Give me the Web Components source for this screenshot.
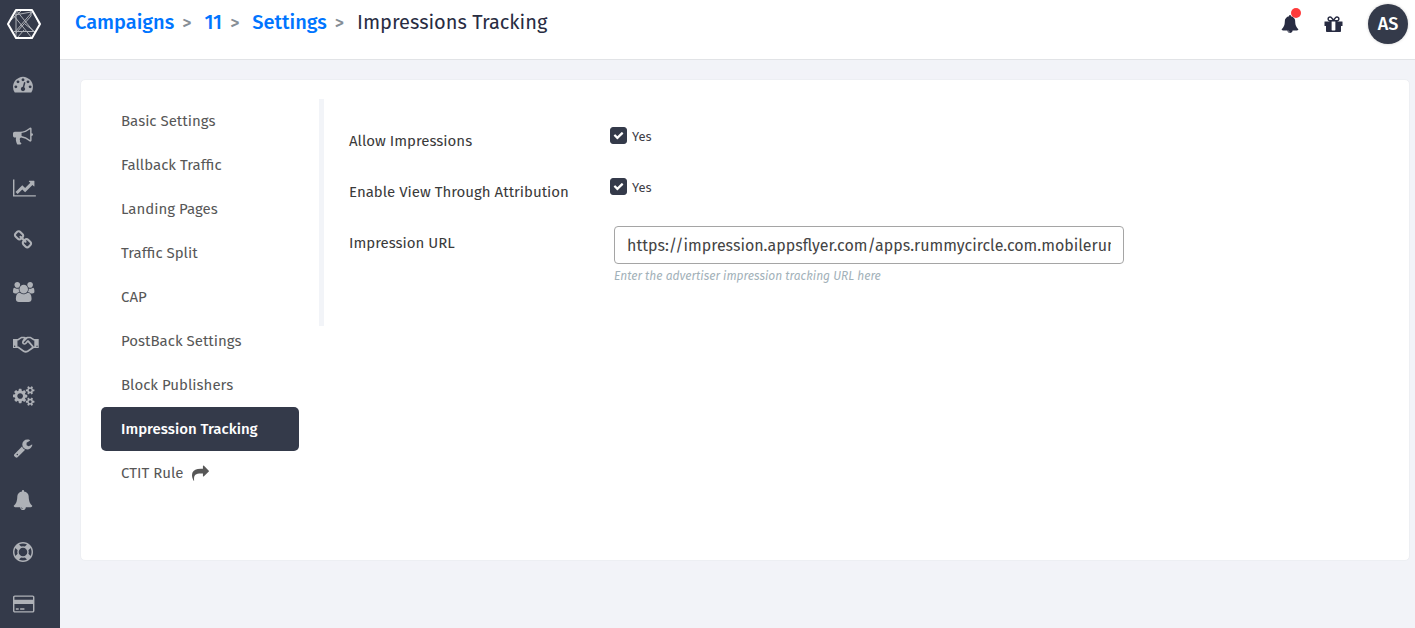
<!DOCTYPE html>
<html lang="en">
<head>
<meta charset="utf-8">
<meta name="viewport" content="width=device-width, initial-scale=1">
<title>Impressions Tracking</title>
<style>
    body {
        margin: 0;
        background: #f2f3f8;
        color: #3f4047;
        font-family: "Fira Sans", "Noto Sans", sans-serif;
        font-size: 15px;
        --dark: #343a4a;
    }
</style>
</head>
<body>
<app-shell>
    <side-bar slot="side"></side-bar>
    <top-bar slot="top" initials="AS">
        <a href="#campaigns">Campaigns</a>
        <a href="#campaign-11">11</a>
        <a href="#settings">Settings</a>
        <span>Impressions Tracking</span>
    </top-bar>
    <settings-card>
        <settings-nav slot="nav">
            <nav-item href="#basic">Basic Settings</nav-item>
            <nav-item href="#fallback">Fallback Traffic</nav-item>
            <nav-item href="#landing">Landing Pages</nav-item>
            <nav-item href="#split">Traffic Split</nav-item>
            <nav-item href="#cap">CAP</nav-item>
            <nav-item href="#postback">PostBack Settings</nav-item>
            <nav-item href="#block">Block Publishers</nav-item>
            <nav-item href="#impression" active>Impression Tracking</nav-item>
            <nav-item href="#ctit">CTIT Rule <fa-icon name="share"></fa-icon></nav-item>
        </settings-nav>
        <check-field label="Allow Impressions"></check-field>
        <check-field label="Enable View Through Attribution"></check-field>
        <url-field label="Impression URL"
            value="https://impression.appsflyer.com/apps.rummycircle.com.mobilerummy"
            hint="Enter the advertiser impression tracking URL here"></url-field>
    </settings-card>
</app-shell>

<script>
// name: [view box width, path], all glyphs are 1792 units high
var smallCog = "v140q0 16-149 31-12 27-30 52 51 113 51 138 0 4-4 7-122 71-124 71-8 0-46-47t-52-68q-20 2-30 2t-30-2q-14 21-52 68t-46 47q-2 0-124-71-4-3-4-7 0-25 51-138-18-25-30-52-149-15-149-31v-140q0-16 149-31 13-29 30-52-51-113-51-138 0-4 4-7 4-2 35-20t59-34 30-16q8 0 46 46.5t52 67.5q20-2 30-2t30 2q51-71 92-112l6-2q4 0 124 70 4 3 4 7 0 25-51 138 17 23 30 52 149 15 149 31z";
var icons = {
    dashboard: [1792, "M384 1152q0-53-37.5-90.5t-90.5-37.5-90.5 37.5-37.5 90.5 37.5 90.5 90.5 37.5 90.5-37.5 37.5-90.5zm192-448q0-53-37.5-90.5t-90.5-37.5-90.5 37.5-37.5 90.5 37.5 90.5 90.5 37.5 90.5-37.5 37.5-90.5zm428 481l101-382q6-26-7.5-48.5t-38.5-29.5-48 6.5-30 39.5l-101 382q-60 5-107 43.5t-63 98.5q-20 77 20 146t117 89 146-20 89-117q16-60-6-117t-72-91zm660-33q0-53-37.5-90.5t-90.5-37.5-90.5 37.5-37.5 90.5 37.5 90.5 90.5 37.5 90.5-37.5 37.5-90.5zm-640-640q0-53-37.5-90.5t-90.5-37.5-90.5 37.5-37.5 90.5 37.5 90.5 90.5 37.5 90.5-37.5 37.5-90.5zm448 192q0-53-37.5-90.5t-90.5-37.5-90.5 37.5-37.5 90.5 37.5 90.5 90.5 37.5 90.5-37.5 37.5-90.5zm320 448q0 261-141 483-19 29-54 29h-1402q-35 0-54-29-141-221-141-483 0-182 71-348t191-286 286-191 348-71 348 71 286 191 191 286 71 348z"],
    bullhorn: [1792, "M1664 640q53 0 90.5 37.5t37.5 90.5-37.5 90.5-90.5 37.5v384q0 52-38 90t-90 38q-417-347-812-380-58 19-91 66t-31 100.5 40 92.5q-20 33-23 65.5t6 58 33.5 55 48 50 61.5 50.5q-29 58-111.5 83t-168.5 11.5-132-55.5q-7-23-29.5-87.5t-32-94.5-23-89-15-101 3.5-98.5 22-110.5h-122q-66 0-113-47t-47-113v-192q0-66 47-113t113-47h480q435 0 896-384 52 0 90 38t38 90v384zm-128 604v-954q-394 302-768 343v270q377 42 768 341z"],
    chart: [2048, "M2048 1536v128h-2048v-1536h128v1408h1920zm-128-1248v435q0 21-19.5 29.5t-35.5-7.5l-121-121-633 633q-10 10-23 10t-23-10l-233-233-416 416-192-192 585-585q10-10 23-10t23 10l233 233 464-464-121-121q-16-16-7.5-35.5t29.5-19.5h435q14 0 23 9t9 23z"],
    chain: [1792, "M1520 1216q0-40-28-68l-208-208q-28-28-68-28-42 0-72 32 3 3 19 18.5t21.5 21.5 15 19 13 25.5 3.5 27.5q0 40-28 68t-68 28q-15 0-27.5-3.5t-25.5-13-19-15-21.5-21.5-18.5-19q-33 31-33 73 0 40 28 68l206 207q27 27 68 27 40 0 68-26l147-146q28-28 28-67zm-703-705q0-40-28-68l-206-207q-28-28-68-28-39 0-68 27l-147 146q-28 28-28 67 0 40 28 68l208 208q27 27 68 27 42 0 72-31-3-3-19-18.5t-21.5-21.5-15-19-13-25.5-3.5-27.5q0-40 28-68t68-28q15 0 27.5 3.5t25.5 13 19 15 21.5 21.5 18.5 19q33-31 33-73zm895 705q0 120-85 203l-147 146q-83 83-203 83-121 0-204-85l-206-207q-83-83-83-203 0-123 88-209l-88-88q-86 88-208 88-120 0-204-84l-208-208q-84-84-84-204t85-203l147-146q83-83 203-83 121 0 204 85l206 207q83 83 83 203 0 123-88 209l88 88q86-88 208-88 120 0 204 84l208 208q84 84 84 204z"],
    users: [1920, "M593 896q-162 5-265 128h-134q-82 0-138-40.5t-56-118.5q0-353 124-353 6 0 43.5 21t97.5 42.5 119 21.5q67 0 133-23-5 37-5 66 0 139 81 256zm1071 637q0 120-73 189.5t-194 69.5h-874q-121 0-194-69.5t-73-189.5q0-53 3.5-103.5t14-109 26.5-108.5 43-97.5 62-81 85.5-53.5 111.5-20q10 0 43 21.5t73 48 107 48 135 21.5 135-21.5 107-48 73-48 43-21.5q61 0 111.5 20t85.5 53.5 62 81 43 97.5 26.5 108.5 14 109 3.5 103.5zm-1024-1277q0 106-75 181t-181 75-181-75-75-181 75-181 181-75 181 75 75 181zm704 384q0 159-112.5 271.5t-271.5 112.5-271.5-112.5-112.5-271.5 112.5-271.5 271.5-112.5 271.5 112.5 112.5 271.5zm576 225q0 78-56 118.5t-138 40.5h-134q-103-123-265-128 81-117 81-256 0-29-5-66 66 23 133 23 59 0 119-21.5t97.5-42.5 43.5-21q124 0 124 353zm-128-609q0 106-75 181t-181 75-181-75-75-181 75-181 181-75 181 75 75 181z"],
    handshake: [2304, "M0 448H420L740 240H1010L1150 290L1290 240H1580L1900 448H2304V1254H1880L1360 1620Q1140 1740 920 1620L430 1254H0ZM150 1040A64 64 0 1 0 150 1168A64 64 0 1 0 150 1040ZM2154 1040A64 64 0 1 0 2154 1168A64 64 0 1 0 2154 1040ZM400 590V1110H500L1000 1470Q1140 1550 1280 1470L1660 1200L1680 1130L1330 740L1190 900Q1030 1040 860 900Q740 760 840 600L980 390H780L480 590H400ZM1320 390L980 720Q930 800 990 830Q1050 850 1110 760L1280 560H1400L1820 1060L1850 1110H1910V590H1840L1540 390Z"],
    cogs: [1920, "M896 896q0-106-75-181t-181-75-181 75-75 181 75 181 181 75 181-75 75-181zm768 512q0-52-38-90t-90-38-90 38-38 90q0 53 37.5 90.5t90.5 37.5 90.5-37.5 37.5-90.5zm0-1024q0-52-38-90t-90-38-90 38-38 90q0 53 37.5 90.5t90.5 37.5 90.5-37.5 37.5-90.5zm-384 421v185q0 10-7 19.5t-16 10.5l-155 24q-11 35-32 76 34 48 90 115 7 11 7 20 0 12-7 19-23 30-82.5 89.5t-78.5 59.5q-11 0-21-7l-115-90q-37 19-77 31-11 108-23 155-7 24-30 24h-186q-11 0-20-7.5t-10-17.5l-23-153q-34-10-75-31l-118 89q-7 7-20 7-11 0-21-8-144-133-144-160 0-9 7-19 10-14 41-53t47-61q-23-44-35-82l-152-24q-10-1-17-9.5t-7-19.5v-185q0-10 7-19.5t16-10.5l155-24q11-35 32-76-34-48-90-115-7-11-7-20 0-12 7-20 22-30 82-89t79-59q11 0 21 7l115 90q34-18 77-32 11-108 23-154 7-24 30-24h186q11 0 20 7.5t10 17.5l23 153q34 10 75 31l118-89q8-7 20-7 11 0 21 8 144 133 144 160 0 8-7 19-12 16-42 54t-45 60q23 48 34 82l152 23q10 2 17 10.5t7 19.5zM1920 1338" + smallCog + "M1920 314" + smallCog],
    wrench: [1792, "M448 1472q0-26-19-45t-45-19-45 19-19 45 19 45 45 19 45-19 19-45zm644-420l-682 682q-37 37-90 37-52 0-91-37l-106-108q-38-36-38-90 0-53 38-91l681-681q39 98 114.5 173.5t173.5 114.5zm634-435q0 39-23 106-47 134-164.5 217.5t-258.5 83.5q-185 0-316.5-131.5t-131.5-316.5 131.5-316.5 316.5-131.5q58 0 121.5 16.5t107.5 46.5q16 11 16 28t-16 28l-293 169v224l193 107q5-3 79-48.5t135.5-81 70.5-35.5q15 0 23.5 10t8.5 25z"],
    bell: [1792, "M912 1696q0-16-16-16-59 0-101.5-42.5t-42.5-101.5q0-16-16-16t-16 16q0 73 51.5 124.5t124.5 51.5q16 0 16-16zm816-288q0 52-38 90t-90 38h-448q0 106-75 181t-181 75-181-75-75-181h-448q-52 0-90-38t-38-90q50-42 91-88t85-119.5 74.5-158.5 50-206 19.5-260q0-152 117-282.5t307-158.5q-8-19-8-39 0-40 28-68t68-28 68 28 28 68q0 20-8 39 190 28 307 158.5t117 282.5q0 139 19.5 260t50 206 74.5 158.5 85 119.5 91 88z"],
    ring: [1792, "M896 0q182 0 348 71t286 191 191 286 71 348-71 348-191 286-286 191-348 71-348-71-286-191-191-286-71-348 71-348 191-286 286-191 348-71zm0 128q-190 0-361 90l194 194q82-28 167-28t167 28l194-194q-171-90-361-90zm-678 1129l194-194q-28-82-28-167t28-167l-194-194q-90 171-90 361t90 361zm678 407q190 0 361-90l-194-194q-82 28-167 28t-167-28l-194 194q171 90 361 90zm0-384q159 0 271.5-112.5t112.5-271.5-112.5-271.5-271.5-112.5-271.5 112.5-112.5 271.5 112.5 271.5 271.5 112.5zm484-217l194 194q90-171 90-361t-90-361l-194 194q28 82 28 167t-28 167z"],
    card: [1920, "M1760 128q66 0 113 47t47 113v1216q0 66-47 113t-113 47h-1600q-66 0-113-47t-47-113v-1216q0-66 47-113t113-47h1600zm-1600 128q-13 0-22.5 9.5t-9.5 22.5v224h1664v-224q0-13-9.5-22.5t-22.5-9.5h-1600zm1600 1280q13 0 22.5-9.5t9.5-22.5v-608h-1664v608q0 13 9.5 22.5t22.5 9.5h1600zm-1504-128v-128h256v128h-256zm384 0v-128h384v128h-384z"],
    gift: [1792, "M1056 1356v-716h-320v716q0 25 18 38.5t46 13.5h192q28 0 46-13.5t18-38.5zm-456-844h195l-126-161q-26-31-69-31-40 0-68 28t-28 68 28 68 68 28zm688-96q0-40-28-68t-68-28q-43 0-69 31l-125 161h194q40 0 68-28t28-68zm376 256v320q0 14-9 23t-23 9h-96v416q0 40-28 68t-68 28h-1088q-40 0-68-28t-28-68v-416h-96q-14 0-23-9t-9-23v-320q0-14 9-23t23-9h440q-93 0-158.5-65.5t-65.5-158.5 65.5-158.5 158.5-65.5q107 0 168 77l128 165 128-165q61-77 168-77 93 0 158.5 65.5t65.5 158.5-65.5 158.5-158.5 65.5h440q14 0 23 9t9 23z"],
    share: [1792, "M1792 640q0 26-19 45l-512 512q-19 19-45 19t-45-19-19-45v-256h-224q-98 0-175.5 6t-154 21.5-133 42.5-105.5 69.5-80 101-48.5 138.5-17.5 181q0 55 5 123 0 6 2.5 23.5t2.5 26.5q0 15-8.5 25t-23.5 10q-16 0-28-17-7-9-13-22t-13.5-30-10.5-24q-127-285-127-451 0-199 53-333 162-403 875-403h224v-256q0-26 19-45t45-19 45 19l512 512q19 19 19 45z"],
    check: [1792, "M1671 566q0 40-28 68l-724 724-136 136q-28 28-68 28t-68-28l-136-136-362-362q-28-28-28-68t28-68l136-136q28-28 68-28t68 28l294 295 656-657q28-28 68-28t68 28l136 136q28 28 28 68z"]
};

class FaIcon extends HTMLElement {
    constructor() {
        super();
        this.attachShadow({mode: "open"});
    }
    connectedCallback() {
        var name = this.getAttribute("name");
        var icon = icons[name];
        this.shadowRoot.innerHTML = `
            <style>
                :host { display: inline-flex; height: var(--icon-size, 20px); }
                svg { height: 100%; fill: currentColor; overflow: visible; }
            </style>
            <svg viewBox="0 0 ${icon[0]} 1792" aria-hidden="true"><path fill-rule="${name == "handshake" ? "evenodd" : "nonzero"}" d="${icon[1]}"/></svg>`;
    }
}

class AppShell extends HTMLElement {
    constructor() {
        super();
        this.attachShadow({mode: "open"}).innerHTML = `
            <style>
                :host { display: flex; height: 100vh; }
                .page { flex: 1; min-width: 0; display: flex; flex-direction: column; }
                main { flex: 1; min-height: 0; overflow: auto; padding: 19px 5px 20px 20px; }
            </style>
            <slot name="side"></slot>
            <div class="page">
                <slot name="top"></slot>
                <main><slot></slot></main>
            </div>`;
    }
}

class SideBar extends HTMLElement {
    constructor() {
        super();
        var names = ["dashboard", "bullhorn", "chart", "chain", "users", "handshake", "cogs", "wrench", "bell", "ring", "card"];
        this.attachShadow({mode: "open"}).innerHTML = `
            <style>
                :host { display: block; width: 60px; flex: none; overflow: hidden; background: var(--dark); color: #aeb1b7; }
                .logo { display: flex; padding: 7px 7px 17px; }
                .logo svg { width: 34px; height: 34px; fill: none; }
                nav a { display: flex; align-items: center; height: 52px; padding-left: 13px; color: inherit; }
            </style>
            <a class="logo" href="#home" aria-label="Home">
                <svg viewBox="0 0 34 34">
                    <path stroke="#aeb1b7" stroke-width="1" d="M9 3L27 25M26 4L8 25M9 3V30M7 24.5H28M8 8L24 5M24 4V9L9 26M7 9L25 31M18 17L28 25M4 13L14 4M28 8L32 17M10 31L17 23"/>
                    <path stroke="#fff" stroke-width="2" stroke-linejoin="round" d="M1 17L9 3H25L33 17L25 31H9Z"/>
                </svg>
            </a>
            <nav>${names.map(n => `<a href="#${n}" aria-label="${n}"><fa-icon name="${n}"></fa-icon></a>`).join("")}</nav>`;
    }
}

class TopBar extends HTMLElement {
    constructor() {
        super();
        this.attachShadow({mode: "open"}).innerHTML = `
            <style>
                :host {
                    display: flex;
                    justify-content: space-between;
                    height: 59px;
                    flex: none;
                    background: #fff;
                    border-bottom: 1px solid #e1e3e6;
                    color: #282c42;
                }
                .crumbs { display: flex; padding: 8px 15px; font-size: 20px; line-height: 28px; }
                ::slotted(a) { color: #0075ff; font-weight: 500; text-decoration: none; }
                ::slotted(a)::after { content: ">"; color: #868e96; font-size: 18px; margin: 0 13px 0 8px; }
                .tools { display: flex; align-items: center; align-self: flex-start; gap: 24px; padding: 4px 7px 0 0; }
                button { border: 0; padding: 0; background: none; color: inherit; font: inherit; }
                .icon { position: relative; display: flex; --icon-size: 21px; }
                .bell { --icon-size: 18px; }
                .dot { position: absolute; left: 10px; top: -7px; width: 10px; height: 10px; border-radius: 50%; background: #ff3b3b; }
                .avatar {
                    width: 40px;
                    height: 40px;
                    border-radius: 50%;
                    background: var(--dark);
                    box-shadow: 0 0 3px #0003;
                    color: #fff;
                    font-size: 18px;
                    font-weight: 500;
                }
            </style>
            <nav class="crumbs" aria-label="Breadcrumb"><slot></slot></nav>
            <div class="tools">
                <button class="icon bell" aria-label="Notifications"><fa-icon name="bell"></fa-icon><span class="dot"></span></button>
                <button class="icon" aria-label="What's new"><fa-icon name="gift"></fa-icon></button>
                <button class="avatar"></button>
            </div>`;
    }
    connectedCallback() {
        this.shadowRoot.querySelector(".avatar").textContent = this.getAttribute("initials");
    }
}

class SettingsCard extends HTMLElement {
    constructor() {
        super();
        this.attachShadow({mode: "open"}).innerHTML = `
            <style>
                :host {
                    display: flex;
                    min-height: 442px;
                    padding: 19px 20px;
                    border: 1px solid #edeff3;
                    border-radius: 5px;
                    background: #fff;
                }
                form {
                    flex: 1;
                    min-width: 0;
                    align-self: flex-start;
                    min-height: 188px;
                    padding: 21px 0 18px 25px;
                    margin-left: 20px;
                    border-left: 5px solid #f2f4f8;
                }
            </style>
            <slot name="nav"></slot>
            <form><slot></slot></form>`;
    }
}

class SettingsNav extends HTMLElement {
    constructor() {
        super();
        this.attachShadow({mode: "open"}).innerHTML = `
            <style>
                :host { display: block; width: 198px; flex: none; }
                nav { display: flex; flex-direction: column; }
            </style>
            <nav aria-label="Campaign settings"><slot></slot></nav>`;
    }
}

class NavItem extends HTMLElement {
    constructor() {
        super();
        this.attachShadow({mode: "open"}).innerHTML = `
            <style>
                :host { display: block; --icon-size: 17px; }
                a {
                    display: flex;
                    align-items: center;
                    gap: 5px;
                    height: 44px;
                    padding: 0 20px;
                    border-radius: 5px;
                    color: #575757;
                    text-decoration: none;
                    white-space: pre;
                }
                :host([active]) a { background: var(--dark); color: #fff; font-weight: 500; }
            </style>
            <a><slot></slot></a>`;
    }
    connectedCallback() {
        this.shadowRoot.querySelector("a").href = this.getAttribute("href");
    }
}

var rowStyle = `
    :host { display: grid; grid-template-columns: 261px minmax(0, 514px); min-height: 51px; }
    .title { padding-top: 11px; line-height: 20px; color: #3a3a3a; }
`;

class CheckField extends HTMLElement {
    constructor() {
        super();
        this.attachShadow({mode: "open"}).innerHTML = `
            <style>
                ${rowStyle}
                .box { display: flex; align-items: flex-start; align-self: start; gap: 5px; padding-top: 7px; line-height: 20px; font-size: 13px; }
                .tick { display: grid; place-items: center; color: #fff; --icon-size: 11px; }
                .tick > * { grid-area: 1 / 1; pointer-events: none; }
                input { appearance: none; width: 17px; height: 17px; margin: 0; border: 1px solid var(--dark); border-radius: 3px; pointer-events: auto; }
                input:checked { background: var(--dark); }
            </style>
            <label class="title" for="check"></label>
            <label class="box"><span class="tick"><input id="check" type="checkbox" checked><fa-icon name="check"></fa-icon></span>Yes</label>`;
    }
    connectedCallback() {
        this.shadowRoot.querySelector(".title").textContent = this.getAttribute("label");
    }
}

class UrlField extends HTMLElement {
    constructor() {
        super();
        this.attachShadow({mode: "open"}).innerHTML = `
            <style>
                ${rowStyle}
                .control { padding: 4px 0 0 4px; }
                input {
                    display: block;
                    box-sizing: border-box;
                    width: 100%;
                    height: 38px;
                    padding: 0 12px;
                    border: 1px solid #a5a5a5;
                    border-radius: 4px;
                    background: #fff;
                    color: #444;
                    font-family: inherit;
                    font-size: 16px;
                }
                .hint { margin-top: 2px; line-height: 20px; color: #a2b1b9; font-size: 12px; font-style: italic; }
            </style>
            <label class="title" for="url"></label>
            <div class="control">
                <input id="url" type="text" aria-describedby="hint">
                <div class="hint" id="hint"></div>
            </div>`;
    }
    connectedCallback() {
        var root = this.shadowRoot;
        root.querySelector(".title").textContent = this.getAttribute("label");
        root.querySelector(".hint").textContent = this.getAttribute("hint");
        root.querySelector("input").value = this.getAttribute("value");
    }
}

customElements.define("fa-icon", FaIcon);
customElements.define("app-shell", AppShell);
customElements.define("side-bar", SideBar);
customElements.define("top-bar", TopBar);
customElements.define("settings-card", SettingsCard);
customElements.define("settings-nav", SettingsNav);
customElements.define("nav-item", NavItem);
customElements.define("check-field", CheckField);
customElements.define("url-field", UrlField);
</script>
</body>
</html>
